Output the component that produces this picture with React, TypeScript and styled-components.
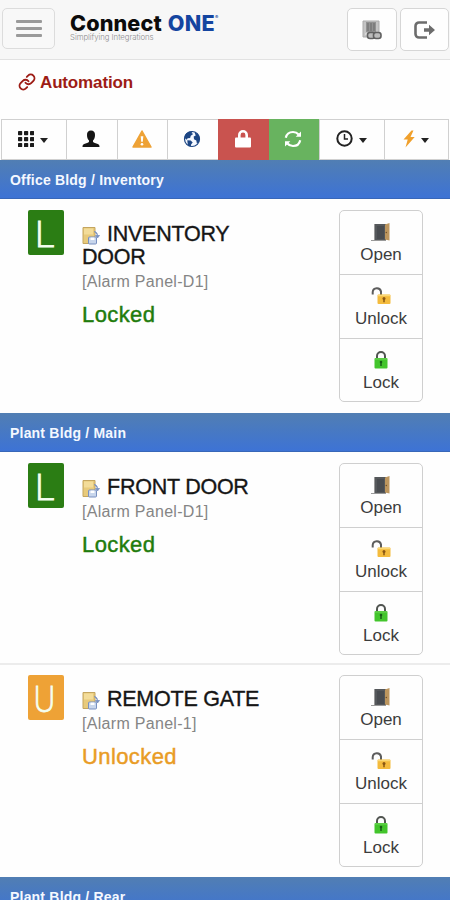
import React from "react";
import styled, { createGlobalStyle } from "styled-components";
import { Link } from "lucide-react";

const Global = createGlobalStyle`
  *, *::before, *::after { box-sizing: border-box; }
  html, body { margin: 0; padding: 0; }
  body { height: 900px; overflow: hidden; background: #fff; color: #161616; font-family: "Liberation Sans", Arial, sans-serif; }
  svg { display: block; flex: none; }
`;

const Page = styled.div`
  width: 450px;
  height: 900px;
  overflow: hidden;
  background: #fefefe;
`;

const Header = styled.header`
  height: 60px;
  display: flex;
  align-items: flex-start;
  padding: 8px 1px 0 2px;
  background: #f7f7f7;
  border-bottom: 1px solid #e2e2e2;
`;

const MenuButton = styled.button`
  width: 53px;
  height: 41px;
  padding: 0;
  display: flex;
  flex-direction: column;
  align-items: center;
  justify-content: center;
  gap: 4px;
  background: #f8f8f8;
  border: 1px solid #dcdcdc;
  border-radius: 5px;
`;

const MenuLine = styled.span`
  width: 26px;
  height: 3px;
  border-radius: 1px;
  background: #9a9a9a;
`;

const Brand = styled.div`
  margin: 3px auto 0 15px;
  width: 152px;
`;

const BrandName = styled.div`
  display: flex;
  align-items: flex-start;
  height: 22px;
  font: 800 21.6px/25px Inter, "Liberation Sans", sans-serif;
  letter-spacing: 0.12px;
  color: #0b0b0b;
  white-space: nowrap;
`;

const BrandAccent = styled.span`
  margin-left: 6px;
  color: #1445a0;
  letter-spacing: 0.3px;
`;

const BrandMark = styled.sup`
  font-size: 5px;
  line-height: 12px;
  color: #1445a0;
`;

const Tagline = styled.div`
  font: 300 7.8px/9px Inter, sans-serif;
  letter-spacing: -0.05px;
  color: #8d8d8d;
  white-space: nowrap;
`;

const HeaderActions = styled.div`
  display: flex;
  gap: 3px;
`;

const HeaderButton = styled.button`
  width: 50px;
  height: 43px;
  padding: 0;
  display: flex;
  align-items: center;
  justify-content: center;
  background: #fefefe;
  border: 1px solid #d6d6d6;
  border-radius: 5px;
  & + & { width: 49px; }
`;

const PageTitle = styled.h1`
  margin: 0;
  height: 59px;
  padding: 13px 0 0 18px;
  display: flex;
  align-items: flex-start;
  gap: 4px;
  font-size: 17px;
  line-height: 20px;
  font-weight: 700;
  letter-spacing: -0.15px;
  color: #9d1c15;
`;

const Toolbar = styled.nav`
  display: grid;
  grid-template-columns: 65px 51px 50px 51px 51px 50px 65px 65px;
  height: 41px;
  padding: 0 1px;
`;

const Tool = styled.button<{ $fill?: string }>`
  height: 41px;
  padding: 0 2px 2px 0;
  display: flex;
  align-items: center;
  justify-content: center;
  gap: 6px;
  background: ${(p) => p.$fill ?? "#fefefe"};
  border: 1px solid ${(p) => p.$fill ?? "#d0d0d0"};
  border-left-width: ${(p) => (p.$fill ? "0" : "1px")};
  border-right-width: 0;
  &:last-child { border-right-width: 1px; }
`;

const Caret = styled.span`
  width: 0;
  height: 0;
  margin-top: 3px;
  border: 4.5px solid transparent;
  border-top: 5px solid #222;
  border-bottom: 0;
`;

const SectionBar = styled.h2`
  margin: 0;
  height: 39px;
  padding: 0 10px;
  font-size: 14px;
  line-height: 41px;
  font-weight: 700;
  letter-spacing: 0.2px;
  color: #f4f8ff;
  background: linear-gradient(#517eb3, #3d73d5);
  border-bottom: 1px solid #3867b8;
`;

const DeviceRow = styled.article<{ $height: number; $divided?: boolean }>`
  height: ${(p) => p.$height}px;
  padding: 11px 27px 0 28px;
  display: flex;
  align-items: flex-start;
  box-shadow: ${(p) => (p.$divided ? "0 1px 0 #ececec, inset 0 -1px 0 #ececec" : "none")};
`;

const StateBadge = styled.div<{ $color: string }>`
  width: 36px;
  height: 45px;
  border-radius: 2px;
  display: flex;
  align-items: center;
  justify-content: center;
  padding-right: 4px;
  background: ${(p) => p.$color};
`;

const BadgeLetter = styled.span<{ $narrow: number }>`
  font: 300 37px/43px "Open Sans", sans-serif;
  color: #f5fff0;
  -webkit-text-stroke: 0.8px #f5fff0;
  transform: scaleX(${(p) => p.$narrow});
`;

const Details = styled.div`
  width: 190px;
  margin: 13px auto 0 18px;
`;

const DeviceName = styled.h3`
  margin: 0;
  width: 180px;
  font-size: 21.5px;
  line-height: 23px;
  font-weight: 400;
  letter-spacing: -0.25px;
  -webkit-text-stroke: 0.35px #161616;
  svg { display: inline-block; vertical-align: -4px; margin-right: 7px; }
`;

const Panel = styled.div`
  margin-top: 3px;
  font-size: 16px;
  line-height: 20px;
  letter-spacing: 0.3px;
  color: #858585;
`;

const Status = styled.div<{ $color: string }>`
  margin-top: 10px;
  font-size: 22px;
  line-height: 26px;
  letter-spacing: 0.4px;
  color: ${(p) => p.$color};
  -webkit-text-stroke: 0.45px ${(p) => p.$color};
`;

const ActionGroup = styled.div`
  width: 84px;
  height: 192px;
  display: grid;
  grid-template-rows: repeat(3, 1fr);
  border: 1px solid #cfcfcf;
  border-radius: 5px;
`;

const Action = styled.button`
  padding: 11px 0 0;
  display: flex;
  flex-direction: column;
  align-items: center;
  gap: 3px;
  border: 0;
  background: none;
  font: 17px/20px "Liberation Sans", Arial, sans-serif;
  color: #3c3c3c;
  & + & { border-top: 1px solid #cfcfcf; }
`;

const ServerIcon = () => (
  <svg width="20" height="20" viewBox="0 0 20 20">
    <path d="M1 1h16v16H1z" fill="#c4c4c4" stroke="#aaa" />
    <path d="M4 2h10v10H4z" fill="#929292" />
    <path d="M6 3v8M9 3v8M12 3v8" stroke="#6b6b6b" />
    <path d="M3 14h5" stroke="#eee" />
    <rect x="5.500" y="12.500" width="7.500" height="6" rx="2.500" fill="#bbb" stroke="#606060" strokeWidth="1.600" />
    <rect x="11.500" y="12.500" width="7.500" height="6" rx="2.500" fill="#bbb" stroke="#606060" strokeWidth="1.600" />
  </svg>
);

const ExitIcon = () => (
  <svg width="22" height="18" viewBox="0 0 22 18">
    <path d="M13 1.500H5A3.500 3.500 0 0 0 1.500 5v8A3.500 3.500 0 0 0 5 16.500h8" fill="none" stroke="#6c6c6c" strokeWidth="2.600" />
    <path d="M10 7.200h5V3.800L21 9l-6 5.200v-3.400h-5z" fill="#6c6c6c" />
  </svg>
);

const GridIcon = () => (
  <svg width="16" height="16" viewBox="0 0 16 16" fill="#1c1c1c">
    {[0, 6, 12].map((y) => [0, 6, 12].map((x) => <rect key={`${x}-${y}`} x={x} y={y} width="4.200" height="4.200" rx=".7" />))}
  </svg>
);

const UserIcon = () => (
  <svg width="18" height="18" viewBox="0 0 18 18" fill="#151515">
    <path d="M9 .5C6.400.5 4.900 2.100 5 5c0 2.500.7 4.200 2 5.400v1.300c-.5.900-3.100 1.600-4.800 2.400C.9 14.700.5 15.500.500 17h17c0-1.500-.4-2.300-1.700-2.900-1.700-.8-4.300-1.500-4.800-2.400v-1.300c1.300-1.200 2-2.900 2-5.400C13.100 2.100 11.600.5 9 .5z" />
  </svg>
);

const WarningIcon = () => (
  <svg width="20" height="18" viewBox="0 0 20 18">
    <path d="M10 1 19 17H1z" fill="#eea236" stroke="#eea236" strokeWidth="1.500" strokeLinejoin="round" />
    <path d="M8.700 6.200h2.600l-.5 5.600H9.200z" fill="#fff" />
    <circle cx="10" cy="14.300" r="1.300" fill="#fff" />
  </svg>
);

const GlobeIcon = () => (
  <svg width="18" height="18" viewBox="0 0 18 18">
    <circle cx="9" cy="9" r="7.500" fill="#f4f8ff" stroke="#1d4684" strokeWidth="1.200" />
    <path d="M2 5C4 2 7 .9 10 1.300L8.500 3l1.700 1.100-2.400 1.700-.7 2.300-2.500.1-.8 1.600L1.600 8z" fill="#1d4684" />
    <path d="M4.300 10.200l3.400.2 2 2-1.500 1.800-.5 2.500-2.900-1.500z" fill="#1d4684" />
    <path d="M11.500 2.200 15 4l1.700 4-.8 4-2 1.500-.6-3-2.300-1.200-.3-2.700 2-1.200z" fill="#1d4684" />
  </svg>
);

const ToolLockIcon = () => (
  <svg width="18" height="18" viewBox="0 0 18 18">
    <path d="M5.300 8V5a3.700 3.700 0 0 1 7.400 0v3" fill="none" stroke="#fff" strokeWidth="2.600" />
    <rect x="1" y="7.500" width="16" height="10" rx="1" fill="#fff" />
  </svg>
);

const RefreshIcon = () => (
  <svg width="18" height="18" viewBox="0 0 18 18">
    <path d="M1.800 7.800C2.500 4.300 5.300 2 9 2c2.300 0 4.200.8 5.600 2.500M16.200 10.200C15.500 13.700 12.700 16 9 16c-2.300 0-4.200-.8-5.600-2.500" fill="none" stroke="#fff" strokeWidth="2.200" />
    <path d="M17 1.500v5.300h-5.300zM1 16.500v-5.300h5.300z" fill="#fff" />
  </svg>
);

const ClockIcon = () => (
  <svg width="17" height="17" viewBox="0 0 17 17" fill="none" stroke="#222">
    <circle cx="8.500" cy="8.500" r="7.200" strokeWidth="2" />
    <path d="M8.500 4v5H12" strokeWidth="1.500" />
  </svg>
);

const BoltIcon = () => (
  <svg width="12" height="18" viewBox="0 0 12 18">
    <path d="M8.500.5.500 9.500h4.200L2.500 17.500 11.700 7H7.500L10.500.5z" fill="#f0a02c" />
  </svg>
);

const NoteIcon = () => (
  <svg width="18" height="19" viewBox="0 0 18 19">
    <path d="M1 1.500h12v16H1z" fill="#e8ca7b" stroke="#c4a55f" />
    <path d="M2 2.500h9v6H2z" fill="#f3dc99" />
    <path d="M12 5.500c2 0 3.500 1.500 3.500 4M13.500 9.500h4l-2 2.500z" stroke="#7890c0" fill="#7890c0" strokeWidth=".8" />
    <rect x="6.500" y="11" width="8" height="7" rx="1" fill="#c8d6ec" stroke="#7890c0" />
    <path d="M8.500 11.500h4v2.500h-4z" fill="#fff" />
  </svg>
);

const DoorIcon = () => (
  <svg width="20" height="20" viewBox="0 0 20 20">
    <path d="M4 2h11v16H4z" fill="#55585b" />
    <path d="M6 4h7v13H6z" fill="#494c50" />
    <path d="M14 2.500 18.500 1v17.500L14 17.500z" fill="#bd965e" />
    <path d="M3.500 2v16M0 18.500h15" stroke="#999" />
    <circle cx="15.300" cy="10.500" r=".7" fill="#6c4b27" />
  </svg>
);

const OpenLockIcon = () => (
  <svg width="20" height="20" viewBox="0 0 20 20">
    <path d="M1.700 8.500V6A4.200 4.200 0 0 1 10 5.500v4" fill="none" stroke="#5d5d5d" strokeWidth="2" />
    <rect x="6.500" y="8.500" width="13" height="9.500" rx="1" fill="#f4bb3d" />
    <path d="M7 9.500h12" stroke="#fbd875" strokeWidth="1.500" />
    <circle cx="13" cy="12.500" r="1.500" fill="#8a5712" />
    <path d="M13 13v3.300" stroke="#8a5712" strokeWidth="1.500" />
  </svg>
);

const ClosedLockIcon = () => (
  <svg width="20" height="20" viewBox="0 0 20 20">
    <path d="M6 9V6a4 4 0 0 1 8 0v3" fill="none" stroke="#505450" strokeWidth="2" />
    <rect x="3.500" y="8" width="13" height="10.500" rx="1" fill="#43c52c" />
    <path d="M4 9h12" stroke="#70d558" />
    <circle cx="10" cy="12" r="1.300" fill="#175c16" />
    <path d="M10 12v4" stroke="#175c16" strokeWidth="1.500" />
  </svg>
);

interface DeviceProps {
  name: string;
  panel: string;
  locked: boolean;
  height: number;
  divided?: boolean;
}

const Device = ({ name, panel, locked, height, divided }: DeviceProps) => (
  <DeviceRow $height={height} $divided={divided}>
    <StateBadge $color={locked ? "#2b7d14" : "#eea236"}>
      <BadgeLetter $narrow={locked ? 1.05 : 0.82}>{locked ? "L" : "U"}</BadgeLetter>
    </StateBadge>
    <Details>
      <DeviceName><NoteIcon />{name}</DeviceName>
      <Panel>{panel}</Panel>
      <Status $color={locked ? "#1f7c0d" : "#e99c25"}>{locked ? "Locked" : "Unlocked"}</Status>
    </Details>
    <ActionGroup>
      <Action><DoorIcon />Open</Action>
      <Action><OpenLockIcon />Unlock</Action>
      <Action><ClosedLockIcon />Lock</Action>
    </ActionGroup>
  </DeviceRow>
);

export default function App() {
  return (
    <>
      <Global />
      <Page>
        <Header>
          <MenuButton aria-label="Menu"><MenuLine /><MenuLine /><MenuLine /></MenuButton>
          <Brand>
            <BrandName>Connect<BrandAccent>ONE</BrandAccent><BrandMark>®</BrandMark></BrandName>
            <Tagline>Simplifying Integrations</Tagline>
          </Brand>
          <HeaderActions>
            <HeaderButton aria-label="Connections"><ServerIcon /></HeaderButton>
            <HeaderButton aria-label="Sign out"><ExitIcon /></HeaderButton>
          </HeaderActions>
        </Header>
        <PageTitle><Link size={18} strokeWidth={2.5} />Automation</PageTitle>
        <Toolbar>
          <Tool><GridIcon /><Caret /></Tool>
          <Tool><UserIcon /></Tool>
          <Tool><WarningIcon /></Tool>
          <Tool><GlobeIcon /></Tool>
          <Tool $fill="#c9534f"><ToolLockIcon /></Tool>
          <Tool $fill="#68b35f"><RefreshIcon /></Tool>
          <Tool><ClockIcon /><Caret /></Tool>
          <Tool><BoltIcon /><Caret /></Tool>
        </Toolbar>
        <SectionBar>Office Bldg / Inventory</SectionBar>
        <Device name="INVENTORY DOOR" panel="[Alarm Panel-D1]" locked height={214} />
        <SectionBar>Plant Bldg / Main</SectionBar>
        <Device name="FRONT DOOR" panel="[Alarm Panel-D1]" locked height={212} divided />
        <Device name="REMOTE GATE" panel="[Alarm Panel-1]" locked={false} height={213} />
        <SectionBar>Plant Bldg / Rear</SectionBar>
      </Page>
    </>
  );
}
